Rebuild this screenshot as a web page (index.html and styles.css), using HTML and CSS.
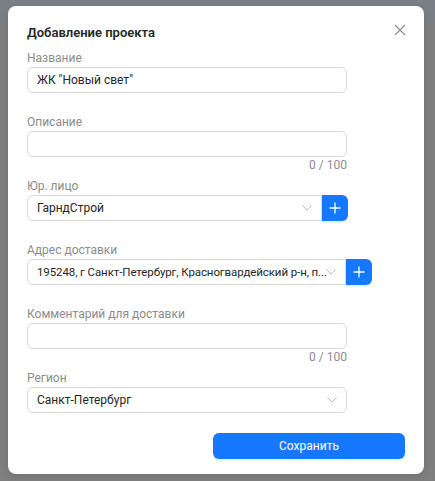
FILE: index.html
```html
<!DOCTYPE html>
<html lang="ru">
<head>
<meta charset="utf-8">
<link rel="stylesheet" href="styles.css">
</head>
<body>
<div class="modal">
  <button class="close" aria-label="Закрыть">
    <svg width="12" height="12" viewBox="0 0 12 12"><path d="M1 1L11 11M11 1L1 11" stroke="#8c8c8c" stroke-width="1.1" fill="none"/></svg>
  </button>
  <div class="title">Добавление проекта</div>

  <div class="field">
    <div class="label">Название</div>
    <div class="input w320"><span class="value">ЖК "Новый свет"</span></div>
  </div>

  <div class="field counted">
    <div class="label">Описание</div>
    <div class="input w320"></div>
    <div class="counter">0 / 100</div>
  </div>

  <div class="field">
    <div class="label">Юр. лицо</div>
    <div class="row">
      <div class="input select sel1"><span class="value">ГарндСтрой</span><span class="chev"><svg width="10" height="6" viewBox="0 0 10 6"><path d="M0.5 0.5L5 5L9.5 0.5" stroke="#bfbfbf" stroke-width="1" fill="none"/></svg></span></div>
      <button class="plus"><svg width="12" height="12" viewBox="0 0 12 12"><path d="M6 0.5V11.5M0.5 6H11.5" stroke="#fff" stroke-width="1.3"/></svg></button>
    </div>
  </div>

  <div class="field">
    <div class="label">Адрес доставки</div>
    <div class="row">
      <div class="input select sel2"><span class="value addr">195248, г Санкт-Петербург, Красногвардейский р-н, п...</span><span class="chev"><svg width="10" height="6" viewBox="0 0 10 6"><path d="M0.5 0.5L5 5L9.5 0.5" stroke="#bfbfbf" stroke-width="1" fill="none"/></svg></span></div>
      <button class="plus"><svg width="12" height="12" viewBox="0 0 12 12"><path d="M6 0.5V11.5M0.5 6H11.5" stroke="#fff" stroke-width="1.3"/></svg></button>
    </div>
  </div>

  <div class="field counted">
    <div class="label">Комментарий для доставки</div>
    <div class="input w320"></div>
    <div class="counter">0 / 100</div>
  </div>

  <div class="field">
    <div class="label">Регион</div>
    <div class="input select w320"><span class="value">Санкт-Петербург</span><span class="chev"><svg width="10" height="6" viewBox="0 0 10 6"><path d="M0.5 0.5L5 5L9.5 0.5" stroke="#bfbfbf" stroke-width="1" fill="none"/></svg></span></div>
  </div>

  <div class="footer">
    <button class="save">Сохранить</button>
  </div>
</div>
</body>
</html>
```

FILE: styles.css
```css
html, body {
  margin: 0;
  padding: 0;
}
body {
  width: 435px;
  height: 481px;
  overflow: hidden;
  background: linear-gradient(#7b7f88 0, #7b7f88 23px, #7f7f7f 23px, #7f7f7f 100%);
  font-family: Roboto, "Noto Sans", sans-serif;
  font-size: 12px;
  color: #262626;
}
.modal {
  position: relative;
  box-sizing: border-box;
  margin: 6px 0 0 8px;
  width: 416px;
  height: 468px;
  padding: 17px 19px 0 19px;
  background: #fff;
  border-radius: 8px;
  box-shadow: 0 2px 8px rgba(0,0,0,0.12);
}
.close {
  position: absolute;
  top: 16px;
  right: 16px;
  width: 16px;
  height: 16px;
  padding: 0;
  border: 0;
  background: none;
  display: flex;
  align-items: center;
  justify-content: center;
}
.title {
  font-size: 13px;
  font-weight: 600;
  line-height: 20px;
  color: #262626;
  margin-bottom: 6px;
}
.field {
  margin-bottom: 20px;
}
.field.counted {
  margin-bottom: 4px;
}
.label {
  line-height: 18px;
  color: #8c8c8c;
}
.input {
  box-sizing: border-box;
  height: 26px;
  border: 1px solid #d9d9d9;
  border-radius: 6px;
  padding: 0 9px;
  display: flex;
  align-items: center;
  background: #fff;
}
.w320 { width: 320px; }
.value {
  flex: 1;
  min-width: 0;
  white-space: nowrap;
  line-height: 24px;
}
.addr {
  font-size: 11.5px;
  letter-spacing: -0.1px;
}
.chev {
  display: flex;
  align-items: center;
  margin-left: 8px;
}
.row {
  display: flex;
}
.row .select {
  border-radius: 6px 0 0 6px;
}
.sel1 { width: 295px; }
.sel2 { width: 319px; }
.plus {
  box-sizing: border-box;
  width: 26px;
  height: 26px;
  border: 0;
  border-radius: 0 6px 6px 0;
  background: #1677ff;
  display: flex;
  align-items: center;
  justify-content: center;
  padding: 0;
  box-shadow: 0 2px 0 rgba(5,145,255,0.1);
}
.counter {
  width: 320px;
  text-align: right;
  line-height: 16px;
  color: #8c8c8c;
}
.footer {
  display: flex;
  justify-content: flex-end;
}
.save {
  width: 192px;
  height: 26px;
  border: 0;
  border-radius: 6px;
  background: #1677ff;
  color: #fff;
  font-family: Roboto, "Noto Sans", sans-serif;
  font-size: 12px;
  box-shadow: 0 2px 0 rgba(5,145,255,0.1);
}
```
